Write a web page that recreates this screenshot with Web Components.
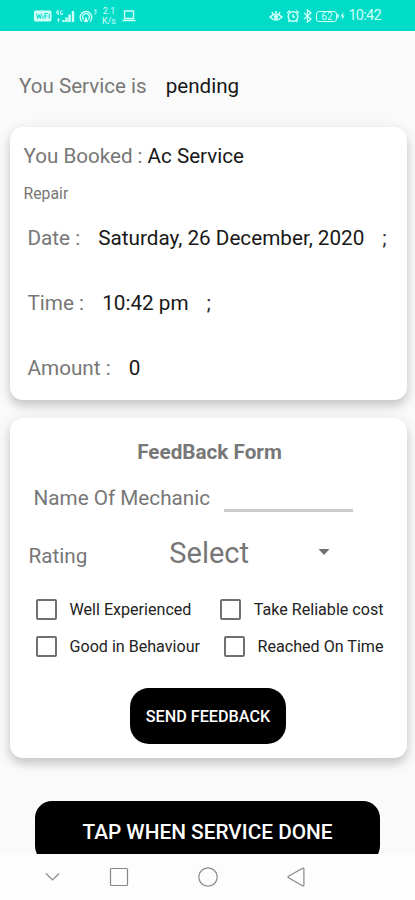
<!DOCTYPE html>
<html lang="en">
<head>
<meta charset="utf-8">
<meta name="viewport" content="width=device-width, initial-scale=1">
<title>Service status</title>
<style>
  body {
    margin: 0;
    font-family: Roboto, "Liberation Sans", sans-serif;
    color: #777;
  }
</style>
</head>
<body>
<service-screen>
  <status-bar slot="status"></status-bar>
  <info-row style="--size: 20.6px; --gap: 19px; margin: 43px 0 0 19px">You Service is<span slot="value">pending</span></info-row>
  <service-card style="height: 273px; margin-top: 29px">
    <info-row style="--size: 20.6px; --gap: 5px; margin: 17px 0 0 14px">You Booked :<span slot="value">Ac Service</span></info-row>
    <info-row style="--size: 15.8px; margin: 14px 0 0 14px">Repair</info-row>
    <info-row style="margin: 20px 0 0 18px">Date :<span slot="value">Saturday, 26 December, 2020</span><span slot="end">;</span></info-row>
    <info-row style="margin: 41px 0 0 18px">Time :<span slot="value">10:42 pm</span><span slot="end">;</span></info-row>
    <info-row style="margin: 41px 0 0 18px">Amount :<span slot="value">0</span></info-row>
  </service-card>
  <service-card style="height: 340px; margin-top: 18px">
    <feedback-form></feedback-form>
  </service-card>
  <black-button slot="footer">TAP WHEN SERVICE DONE</black-button>
  <nav-bar slot="nav"></nav-bar>
</service-screen>

<script>
class ServiceScreen extends HTMLElement {
  constructor() {
    super();
    this.attachShadow({ mode: "open" });
    this.shadowRoot.innerHTML = `
      <style>
        :host { display: flex; flex-direction: column; height: 900px; overflow: hidden; background: #fafafa; }
        main { display: flex; flex-direction: column; height: 823px; overflow: hidden; }
        footer { display: flex; flex-direction: column; padding: 43px 35px 0; --h: 62px; --radius: 17px; --size: 20.800px; }
      </style>
      <slot name="status"></slot>
      <main>
        <slot></slot>
        <footer><slot name="footer"></slot></footer>
      </main>
      <slot name="nav"></slot>
    `;
  }
}

class StatusBar extends HTMLElement {
  constructor() {
    super();
    this.attachShadow({ mode: "open" });
    this.shadowRoot.innerHTML = `
      <style>
        :host { display: flex; flex: none; align-items: center; box-sizing: border-box; height: 31px; padding: 1px 34px 0; background: #00dcc8; color: #d0fff8; }
        svg { display: block; flex: none; fill: none; stroke: currentColor; }
        .left, .right { display: flex; align-items: center; }
        .right { margin-left: auto; }
        .speed { width: 14px; margin: 0 6px 0 4px; font-size: 9px; line-height: 10px; text-align: center; }
        .battery { box-sizing: border-box; width: 21px; height: 11px; border: 1px solid; border-radius: 3px; font-size: 10px; line-height: 9px; text-align: center; }
        .clock { font-size: 14.500px; line-height: 16px; margin-left: 3px; letter-spacing: -.7px; }
      </style>
      <div class="left">
        <svg width="18" height="12" viewBox="0 0 18 12">
          <rect x="0" y="0.5" width="17.5" height="11" rx="1.5" fill="currentColor" stroke="none"/>
          <path d="M2.5 3.5l1.2 5 1.3-4 1.3 4 1.2-5M9 5.5v3.2M11 8.7V3.5h2.8M11 6h2.3M15.3 3.5v5.2" stroke="#00dcc8"/>
        </svg>
        <svg width="20" height="14" viewBox="0 0 20 14" style="margin-left: 3px">
          <path d="M3 1L1 4h3M3 1v5M7.500 2H5.600v3.500h2V4M3.500 9v4M2 11h3" stroke-width="0.9"/>
          <path d="M8.500 11v2M11.500 8.500V13M14.500 5.500V13M18 2v11" stroke-width="2.400"/>
        </svg>
        <svg width="19" height="15" viewBox="0 0 19 15" style="margin-left: 4px">
          <path d="M3 12.500a5.800 5.800 0 1 1 8 0M4.700 10.500a3.400 3.400 0 1 1 4.600 0" stroke-width="1.400"/>
          <path d="M7 7.500L4.700 13h4.600z" fill="currentColor" stroke="none"/>
          <path d="M15 1h2.500L16 2.700c2 0 2 2.500-.8 2" stroke-width="0.9"/>
        </svg>
        <div class="speed">2.1<br>K/s</div>
        <svg width="14" height="12" viewBox="0 0 14 12">
          <path d="M2.500 1h9v7.500h-9zM0.500 10.500h13" stroke-width="1.400"/>
        </svg>
      </div>
      <div class="right">
        <svg width="14" height="12" viewBox="0 0 14 12">
          <path d="M1 7q6-6 12 0-6 6-12 0zM7 1v2M3 2l1 2M11 2l-1 2" stroke-width="1.500"/>
          <circle cx="7" cy="7" r="1.800" fill="currentColor"/>
        </svg>
        <svg width="14" height="14" viewBox="0 0 14 14" style="margin-left: 3px">
          <circle cx="7" cy="7.500" r="4.800" stroke-width="1.500"/>
          <path d="M7 5v3h2M1 4l3-2.500M13 4l-3-2.500M3.500 11.500l-1 1.500M10.500 11.500l1 1.500" stroke-width="1.400"/>
        </svg>
        <svg width="9" height="14" viewBox="0 0 9 14" style="margin: 0 4px 0 3px">
          <path d="M1 4l7 6-3.500 3V1L8 4l-7 6" stroke-width="1.400"/>
        </svg>
        <div class="battery">62</div>
        <svg width="8" height="10" viewBox="0 0 8 10">
          <path d="M1 3v4" stroke-width="1.500"/>
          <path d="M6.500 1L3.500 5.500h2L4.800 9l3-4.500H6z" fill="currentColor" stroke="none"/>
        </svg>
        <div class="clock">10:42</div>
      </div>
    `;
  }
}

class InfoRow extends HTMLElement {
  constructor() {
    super();
    this.attachShadow({ mode: "open" });
    this.shadowRoot.innerHTML = `
      <style>
        :host { display: flex; flex: none; gap: var(--gap, 18px); font-size: var(--size, 20.700px); line-height: 24px; white-space: nowrap; }
        ::slotted([slot="value"]) { color: #181818; }
        ::slotted([slot="end"]) { color: #333; }
      </style>
      <span><slot></slot></span><slot name="value"></slot><slot name="end"></slot>
    `;
  }
}

class ServiceCard extends HTMLElement {
  constructor() {
    super();
    this.attachShadow({ mode: "open" });
    this.shadowRoot.innerHTML = `
      <style>
        :host {
          display: flex;
          flex: none;
          flex-direction: column;
          box-sizing: border-box;
          margin: 0 8.5px 0 9.5px;
          border-radius: 13px;
          background: #fff;
          box-shadow: 0 6px 9px rgba(0, 0, 0, .14), 0 3px 16px rgba(0, 0, 0, .1);
        }
      </style>
      <slot></slot>
    `;
  }
}

class BlackButton extends HTMLElement {
  constructor() {
    super();
    this.attachShadow({ mode: "open" });
    this.shadowRoot.innerHTML = `
      <style>
        :host { display: flex; }
        button {
          flex: 1;
          height: var(--h, 56px);
          padding: 0;
          border: 0;
          border-radius: var(--radius, 19px);
          background: #000;
          color: #fff;
          font: 500 var(--size, 16.200px) Roboto, "Liberation Sans", sans-serif;
          white-space: nowrap;
        }
      </style>
      <button><slot></slot></button>
    `;
  }
}

class CheckOption extends HTMLElement {
  constructor() {
    super();
    this.attachShadow({ mode: "open" });
    this.shadowRoot.innerHTML = `
      <style>
        :host { display: flex; align-items: center; gap: 13px; color: #222; font-size: 16.100px; line-height: 21px; white-space: nowrap; }
        i { box-sizing: border-box; width: 21px; height: 21px; border: 2px solid #707070; border-radius: 2px; }
      </style>
      <i></i><span><slot></slot></span>
    `;
    this.addEventListener("click", () => this.toggleAttribute("checked"));
  }
}

class FeedbackForm extends HTMLElement {
  constructor() {
    super();
    this.attachShadow({ mode: "open" });
    this.shadowRoot.innerHTML = `
      <style>
        :host { display: flex; flex-direction: column; font-size: 20.700px; line-height: 24px; white-space: nowrap; }
        h2 { margin: 22px 0 0 3px; font-size: 20.700px; font-weight: 700; text-align: center; }
        .name { display: flex; margin: 22px 0 0 24px; height: 26px; }
        .name input { width: 129px; height: 26px; margin-left: 14px; padding: 0; border: 0; border-bottom: 3px solid #ccc; background: none; box-sizing: border-box; }
        .rating { display: flex; align-items: center; margin: 23px 0 0 19px; height: 36px; }
        .rating span { margin-top: 5px; }
        .rating b { margin-left: 82px; font-size: 29px; font-weight: 400; line-height: 36px; }
        .rating svg { margin: 0 0 2px 69px; }
        .options { display: flex; flex-direction: column; gap: 16px; margin: 28px 23px 0 26px; }
        .options div { display: flex; justify-content: space-between; }
        black-button { width: 156px; margin: 31px auto 0 120.5px; }
      </style>
      <h2>FeedBack Form</h2>
      <label class="name">Name Of Mechanic<input type="text"></label>
      <div class="rating">
        <span>Rating</span><b>Select</b>
        <svg width="12" height="6" viewBox="0 0 12 6"><path d="M0.500 0h11L6 6z" fill="#707070"/></svg>
      </div>
      <div class="options">
        <div><check-option>Well Experienced</check-option><check-option>Take Reliable cost</check-option></div>
        <div><check-option>Good in Behaviour</check-option><check-option>Reached On Time</check-option></div>
      </div>
      <black-button>SEND FEEDBACK</black-button>
    `;
  }
}

class NavBar extends HTMLElement {
  constructor() {
    super();
    this.attachShadow({ mode: "open" });
    this.shadowRoot.innerHTML = `
      <style>
        :host { display: flex; flex: none; align-items: center; height: 46px; padding-left: 45px; background: #fdfdfd; }
        svg { display: block; fill: none; stroke: #888; stroke-width: 1.2; }
      </style>
      <svg width="15" height="20" viewBox="0 0 15 20"><path d="M1 6.500l6.500 6.500L14 6.500"/></svg>
      <svg width="20" height="20" viewBox="0 0 20 20" style="margin-left: 49px"><rect x="1.500" y="1.500" width="17" height="17" rx="1"/></svg>
      <svg width="20" height="20" viewBox="0 0 20 20" style="margin-left: 69px"><circle cx="10" cy="10" r="9.200"/></svg>
      <svg width="18" height="20" viewBox="0 0 18 20" style="margin-left: 69px"><path d="M1.500 9.300L15.500 1.200q1.400-.6 1.400 1v15.600q0 1.600-1.400 1L1.500 10.700q-1-.7 0-1.400z"/></svg>
    `;
  }
}

customElements.define("service-screen", ServiceScreen);
customElements.define("status-bar", StatusBar);
customElements.define("info-row", InfoRow);
customElements.define("service-card", ServiceCard);
customElements.define("black-button", BlackButton);
customElements.define("check-option", CheckOption);
customElements.define("feedback-form", FeedbackForm);
customElements.define("nav-bar", NavBar);
</script>
</body>
</html>
